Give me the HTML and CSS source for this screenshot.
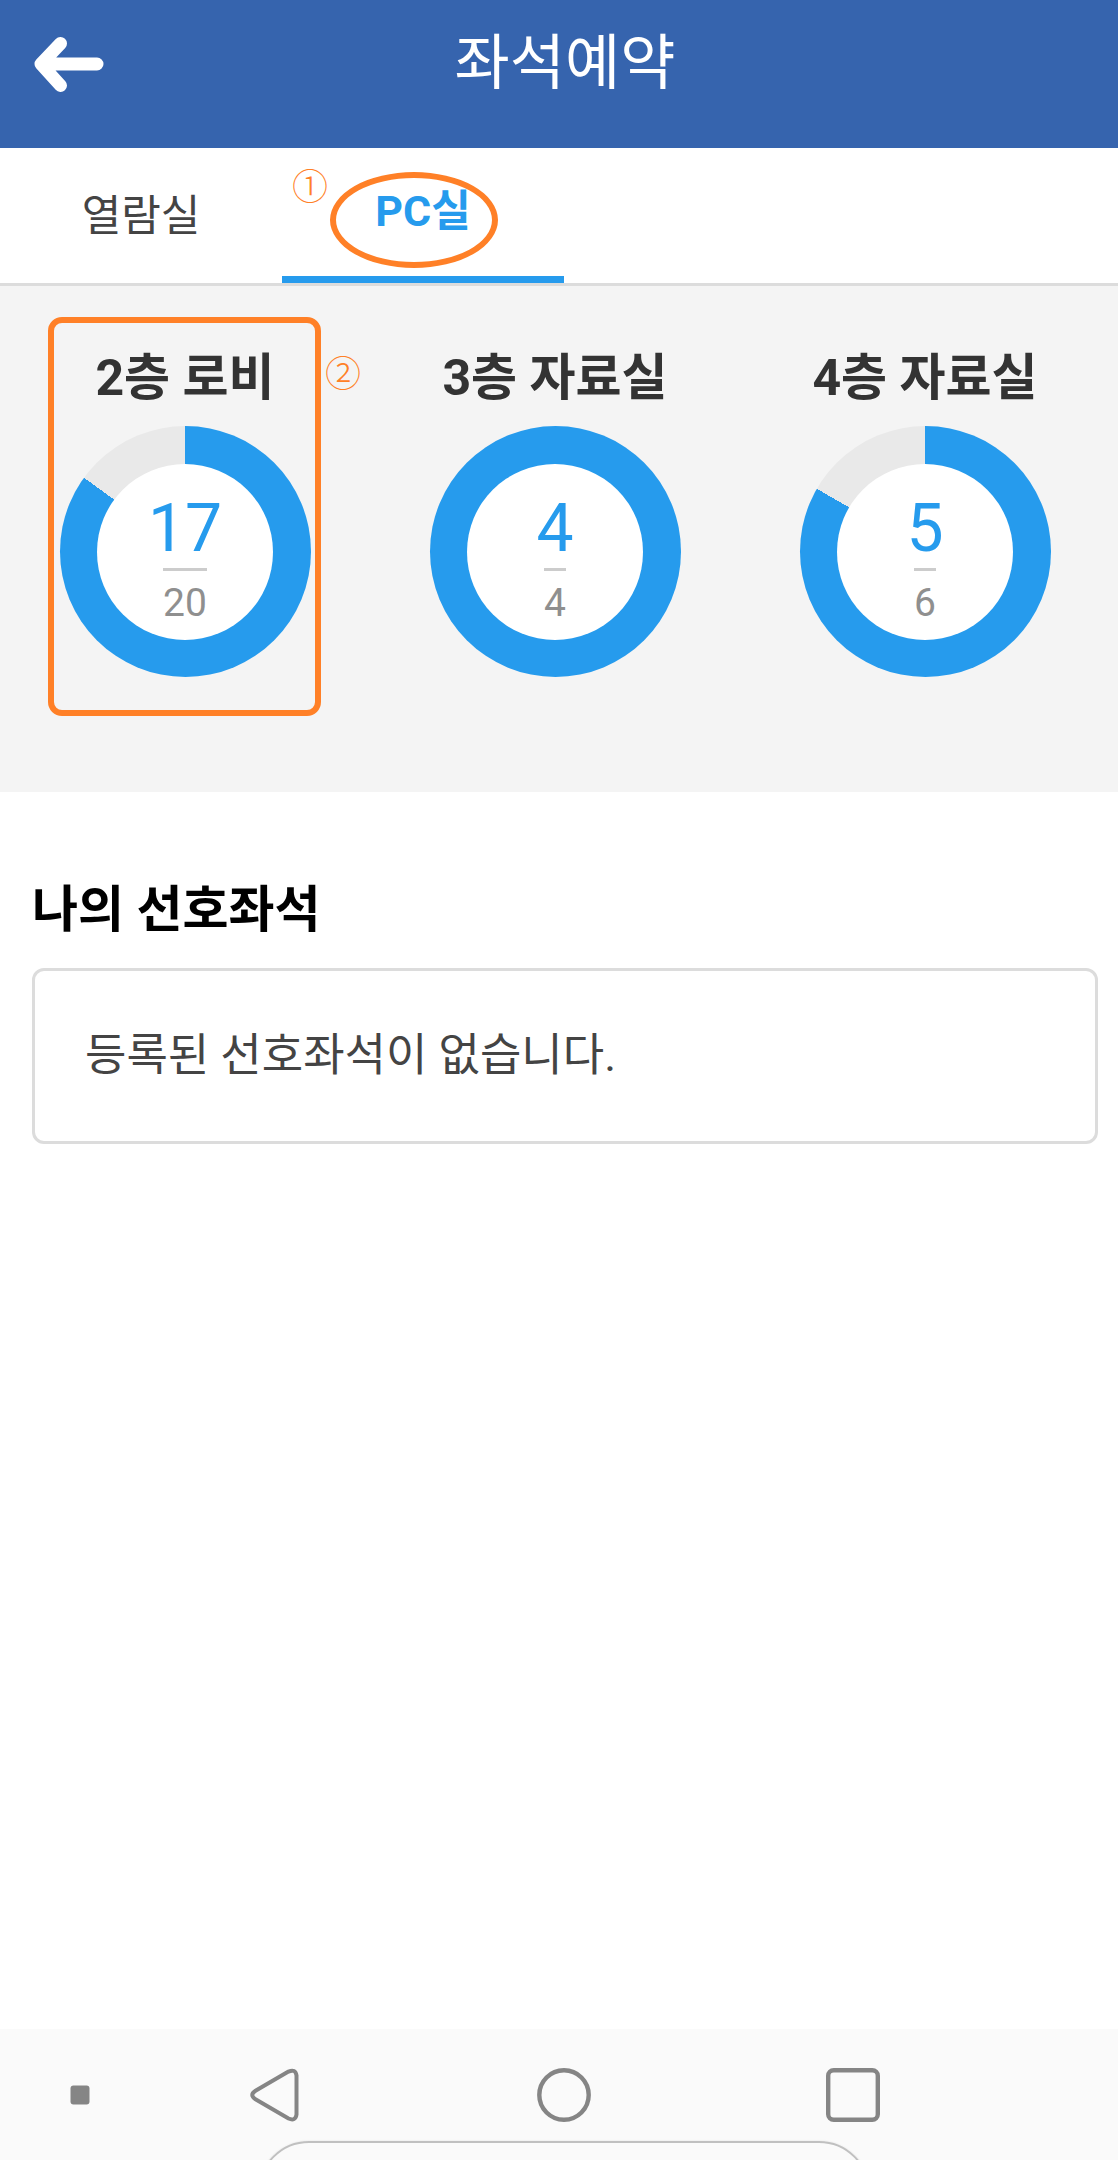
FILE: index.html
```html
<!DOCTYPE html>
<html lang="ko">
<head>
<meta charset="utf-8">
<meta name="viewport" content="width=device-width, initial-scale=1">
<title>좌석예약</title>
<link rel="stylesheet" href="styles.css">
</head>
<body>
<header class="topbar">
  <button class="back" type="button" aria-label="뒤로">
    <svg width="70" height="56" viewBox="0 0 70 56" aria-hidden="true">
      <path d="M26.500 7.500L7 28L26.500 49.500M7 28H63" fill="none" stroke="#fff" stroke-width="13" stroke-linecap="round" stroke-linejoin="round"/>
    </svg>
  </button>
  <h1 class="title">좌석예약</h1>
</header>

<nav class="tabs">
  <a class="tab" href="#reading">열람실</a>
  <a class="tab tab-active" href="#pc" aria-current="page">PC실
    <span class="mark mark-ellipse"></span>
    <span class="step step-one">①</span>
  </a>
</nav>

<main class="content">
  <section class="rooms">
    <a class="room" href="#room-2f">
      <h2 class="room-name">2층 로비</h2>
      <div class="ring" style="--share: 85%">
        <div class="ring-hole">
          <span class="used">17</span>
          <span class="total">20</span>
        </div>
      </div>
      <span class="mark mark-box"></span>
      <span class="step step-two">②</span>
    </a>
    <a class="room" href="#room-3f">
      <h2 class="room-name">3층 자료실</h2>
      <div class="ring" style="--share: 100%">
        <div class="ring-hole">
          <span class="used">4</span>
          <span class="total">4</span>
        </div>
      </div>
    </a>
    <a class="room" href="#room-4f">
      <h2 class="room-name">4층 자료실</h2>
      <div class="ring" style="--share: 83.33%">
        <div class="ring-hole">
          <span class="used">5</span>
          <span class="total">6</span>
        </div>
      </div>
    </a>
  </section>

  <section class="favorites">
    <h2 class="favorites-title">나의 선호좌석</h2>
    <p class="favorites-empty">등록된 선호좌석이 없습니다.</p>
  </section>
</main>

<footer class="sysnav">
  <div class="keys">
    <button class="key key-dot" type="button" aria-label="메뉴">
      <svg width="20" height="20" viewBox="0 0 20 20"><rect x="0.500" y="0.500" width="19" height="19" rx="3" fill="#858585"/></svg>
    </button>
    <button class="key" type="button" aria-label="뒤로 가기">
      <svg width="54" height="54" viewBox="0 0 54 54"><path d="M40.500 3.600L7.500 22.800Q1 27 7.500 31.200L40.500 50.500Q47.500 53.500 48.500 46.500V7.500Q47.500 0.500 40.500 3.600Z" fill="none" stroke="#858585" stroke-width="4"/></svg>
    </button>
    <button class="key" type="button" aria-label="홈">
      <svg width="54" height="54" viewBox="0 0 54 54"><circle cx="27" cy="27" r="24.700" fill="none" stroke="#858585" stroke-width="4.400"/></svg>
    </button>
    <button class="key" type="button" aria-label="최근 앱">
      <svg width="54" height="54" viewBox="0 0 54 54"><rect x="2.200" y="2.200" width="49.600" height="49.600" rx="5.500" fill="none" stroke="#858585" stroke-width="4.400"/></svg>
    </button>
  </div>
  <div class="handle"></div>
</footer>
</body>
</html>
```
FILE: styles.css
```css
* {
  box-sizing: border-box;
}

body {
  margin: 0;
  min-height: 100vh;
  display: flex;
  flex-direction: column;
  background: #fff;
  color: #444;
  font-family: Roboto, "Noto Sans CJK KR", sans-serif;
}

h1,
h2,
p {
  margin: 0;
}

a {
  color: inherit;
  text-decoration: none;
}

button {
  padding: 0;
  border: 0;
  background: none;
}

/* Header */
.topbar {
  display: grid;
  grid-template-columns: 104px 1fr 92px;
  align-items: center;
  padding-bottom: 21px;
  height: 148px;
  background: #3664ae;
}

.back {
  display: flex;
  justify-content: flex-end;
}

.title {
  color: #fff;
  font-size: 60px;
  font-weight: 400;
  line-height: 80px;
  text-align: center;
}

/* Tabs */
.tabs {
  display: flex;
  height: 138px;
  border-bottom: 3px solid #dcdcdc;
}

.tab {
  position: relative;
  width: 282px;
  padding-top: 38px;
  font-size: 43px;
  line-height: 60px;
  text-align: center;
}

.tab-active {
  padding-top: 33px;
  border-bottom: 7px solid #269bed;
  color: #269bed;
  font-weight: 700;
}

/* Guide annotations */
.mark {
  position: absolute;
  border: 6px solid #ff8027;
}

.mark-ellipse {
  top: 24px;
  left: 48px;
  width: 168px;
  height: 96px;
  border-radius: 50%;
}

.mark-box {
  top: 31px;
  left: 50%;
  width: 273px;
  height: 399px;
  margin-left: -137px;
  border-radius: 14px;
}

.step {
  position: absolute;
  color: #ff8027;
  font-family: "Noto Sans CJK KR", sans-serif;
  font-size: 36px;
  font-weight: 300;
  line-height: 36px;
}

.step-one {
  top: 18px;
  left: 10px;
}

.step-two {
  top: 67px;
  left: 50%;
  margin-left: 140px;
}

/* Room occupancy */
.content {
  flex: 1;
}

.rooms {
  display: grid;
  grid-template-columns: repeat(3, 1fr);
  padding-right: 8px;
  padding-bottom: 115px;
  background: #f4f4f4;
}

.room {
  position: relative;
  display: flex;
  flex-direction: column;
  align-items: center;
  gap: 18px;
  padding-top: 62px;
}

.room-name {
  color: #333;
  font-size: 50px;
  font-weight: 700;
  line-height: 60px;
}

.ring {
  display: grid;
  place-items: center;
  width: 251px;
  height: 251px;
  border-radius: 50%;
  background: conic-gradient(#269bed var(--share), #e9e9e9 0);
}

.ring-hole {
  display: flex;
  flex-direction: column;
  align-items: center;
  width: 176px;
  height: 176px;
  padding-top: 26px;
  border-radius: 50%;
  background: #fff;
}

.used {
  color: #269bed;
  font-size: 66px;
  line-height: 78px;
}

.total {
  padding-top: 9px;
  border-top: 3px solid #ccc;
  color: #8f8f8f;
  font-size: 39px;
  line-height: 46px;
}

/* Favourite seats */
.favorites {
  padding: 82px 20px 0 32px;
}

.favorites-title {
  color: #000;
  font-size: 50px;
  font-weight: 700;
  line-height: 72px;
}

.favorites-empty {
  margin-top: 22px;
  padding: 50px;
  border: 3px solid #dcdcdc;
  border-radius: 12px;
  font-size: 45px;
  line-height: 70px;
}

/* System navigation */
.sysnav {
  height: 131px;
  overflow: hidden;
  background: #fafafa;
}

.keys {
  display: grid;
  grid-template-columns: 130px repeat(3, 1fr) 121px;
  align-items: center;
  height: 113px;
  padding-top: 19px;
}

.key {
  display: flex;
  justify-content: center;
}

.key-dot {
  padding-left: 30px;
}

.handle {
  position: relative;
  left: 5px;
  width: 612px;
  height: 102px;
  margin: -1px auto 0;
  border: 2px solid #c0c0c0;
  border-radius: 51px;
  box-shadow: 0 0 2px #ddd;
}
```
